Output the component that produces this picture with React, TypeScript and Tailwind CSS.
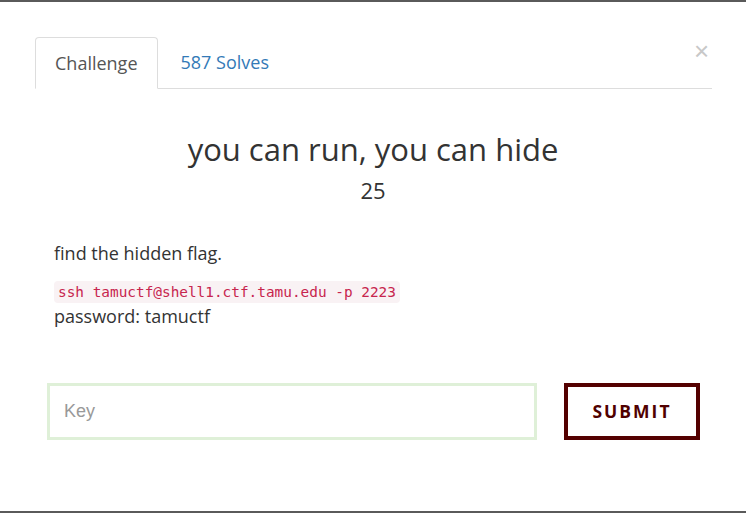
import React from "react";

export default function App() {
  return (
    <div
      className="relative w-[746px] h-[513px] bg-white border-y-2 border-[#5a5a5a] text-[#333]"
      style={{ fontFamily: '"Open Sans", "Noto Sans", sans-serif' }}
    >
      <div className="pt-[35px] pl-[35px] pr-[34px]">
        <div className="flex border-b border-[#dddddd]">
          <div className="h-[52px] -mb-px flex items-center px-[19px] border border-[#dddddd] border-b-white rounded-t-[4px] text-[18px] text-[#555]">
            Challenge
          </div>
          <div className="h-[51px] flex items-center ml-[3px] px-[20px] text-[18px] text-[#337ab7]">
            587 Solves
          </div>
        </div>
      </div>
      <button className="absolute left-[694px] top-[36px] text-[26px] leading-none text-[#c8c8c8] font-[Liberation_Sans]">
        ×
      </button>
      <div className="text-center mt-[42px] text-[31px] leading-[36px] text-[#333]">
        you can run, you can hide
      </div>
      <div className="text-center mt-[9px] text-[22px] leading-[28px] text-[#333]">
        25
      </div>
      <div className="px-[54px] mt-[37px] text-[18px] leading-[24px] text-[#333]">
        <p>find the hidden flag.</p>
        <p className="mt-[13px] leading-[24px]">
          <code
            className="bg-[#f9f2f4] text-[#c7254e] rounded-[4px] px-[4px] py-[3px] text-[14.4px]"
            style={{ fontFamily: '"DejaVu Sans Mono", monospace' }}
          >
            ssh tamuctf@shell1.ctf.tamu.edu -p 2223
          </code>
          <br />
          password: tamuctf
        </p>
      </div>
      <div className="flex items-start mt-[55px] pl-[47px] pr-[46px] gap-[27px]">
        <input
          placeholder="Key"
          className="w-[490px] h-[57px] border-[3px] border-[#dff0d8] px-[14px] text-[18px] outline-none placeholder:text-[#999]"
          style={{ fontFamily: '"Liberation Sans", Arial, sans-serif' }}
        />
        <button className="w-[136px] h-[57px] border-4 border-[#540000] text-[#500000] font-bold text-[17.5px] tracking-[2px]">
          SUBMIT
        </button>
      </div>
    </div>
  );
}
